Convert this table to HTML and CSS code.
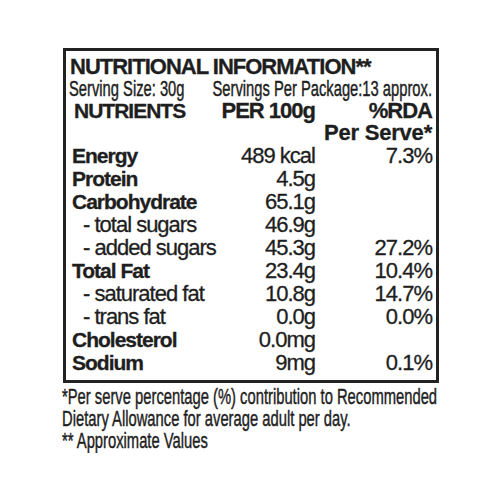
FILE: index.html
```html
<!DOCTYPE html>
<html lang="en">
<head>
    <meta charset="UTF-8">
    <meta name="viewport" content="width=device-width, initial-scale=1.0">
    <title>Nutritional Information</title>
    <link rel="stylesheet" href="styles.css">
</head>
<body>
    <div class="label">
        <div class="title">NUTRITIONAL INFORMATION**</div>
        <div class="serving">
            <span>Serving Size: 30g</span>
            <span>Servings Per Package:13 approx.</span>
        </div>

        <div class="facts">
            <div class="head name">NUTRIENTS</div>
            <div class="head num">PER 100g</div>
            <div class="head num">%RDA</div>
            <div class="head"></div>
            <div class="head"></div>
            <div class="head num serve">Per Serve*</div>

            <div class="name">Energy</div><div class="num">489 kcal</div><div class="num">7.3%</div>
            <div class="name">Protein</div><div class="num">4.5g</div><div class="num"></div>
            <div class="name">Carbohydrate</div><div class="num">65.1g</div><div class="num"></div>
            <div class="sub">- total sugars</div><div class="num">46.9g</div><div class="num"></div>
            <div class="sub">- added sugars</div><div class="num">45.3g</div><div class="num">27.2%</div>
            <div class="name">Total Fat</div><div class="num">23.4g</div><div class="num">10.4%</div>
            <div class="sub">- saturated fat</div><div class="num">10.8g</div><div class="num">14.7%</div>
            <div class="sub">- trans fat</div><div class="num">0.0g</div><div class="num">0.0%</div>
            <div class="name">Cholesterol</div><div class="num">0.0mg</div><div class="num"></div>
            <div class="name">Sodium</div><div class="num">9mg</div><div class="num">0.1%</div>
        </div>
    </div>

    <p class="note">
        *Per serve percentage (%) contribution to Recommended<br>
        Dietary Allowance for average adult per day.<br>
        ** Approximate Values
    </p>
</body>
</html>
```

FILE: styles.css
```css
body {
    margin: 0;
    background: #fff;
    color: #1e1e1e;
    font-family: 'Liberation Sans', Arial, sans-serif;
    -webkit-text-stroke: 0.3px #1e1e1e;
}
.label {
    width: 376px;
    box-sizing: border-box;
    margin: 48px 0 0 63px;
    padding: 5px 4px 6px 6px;
    border: 3px solid #222;
    letter-spacing: -1px;
}
.title {
    margin-left: -2px;
    font-size: 22px;
    line-height: 22px;
    font-weight: bold;
}
/* serving line and footnote are set small and stretched tall,
   which gives the label's condensed look */
.serving {
    display: flex;
    justify-content: space-between;
    margin: 0 0 7px -3px;
    font-size: 14.74px;
    line-height: 14.77px;
    letter-spacing: 0;
    transform: scaleY(1.4925);
    transform-origin: left top;
}
.facts {
    display: grid;
    grid-template-columns: 1fr 95px 117px;
    margin-top: 2px;
    font-size: 22px;
    line-height: 23px;
}
.facts .head {
    line-height: 22px;
    font-weight: bold;
}
.facts .head.name {
    padding-left: 2px;
}
.facts .serve {
    letter-spacing: -0.2px;
}
.name {
    font-weight: bold;
    font-size: 21px;
}
.sub {
    padding-left: 11px;
    white-space: nowrap;
}
.num {
    text-align: right;
    white-space: nowrap;
}
.note {
    margin: 4px 0 0 62px;
    padding-bottom: 21px;
    font-size: 14.77px;
    line-height: 15.11px;
    white-space: nowrap;
    transform: scaleY(1.4556);
    transform-origin: left top;
}
```
